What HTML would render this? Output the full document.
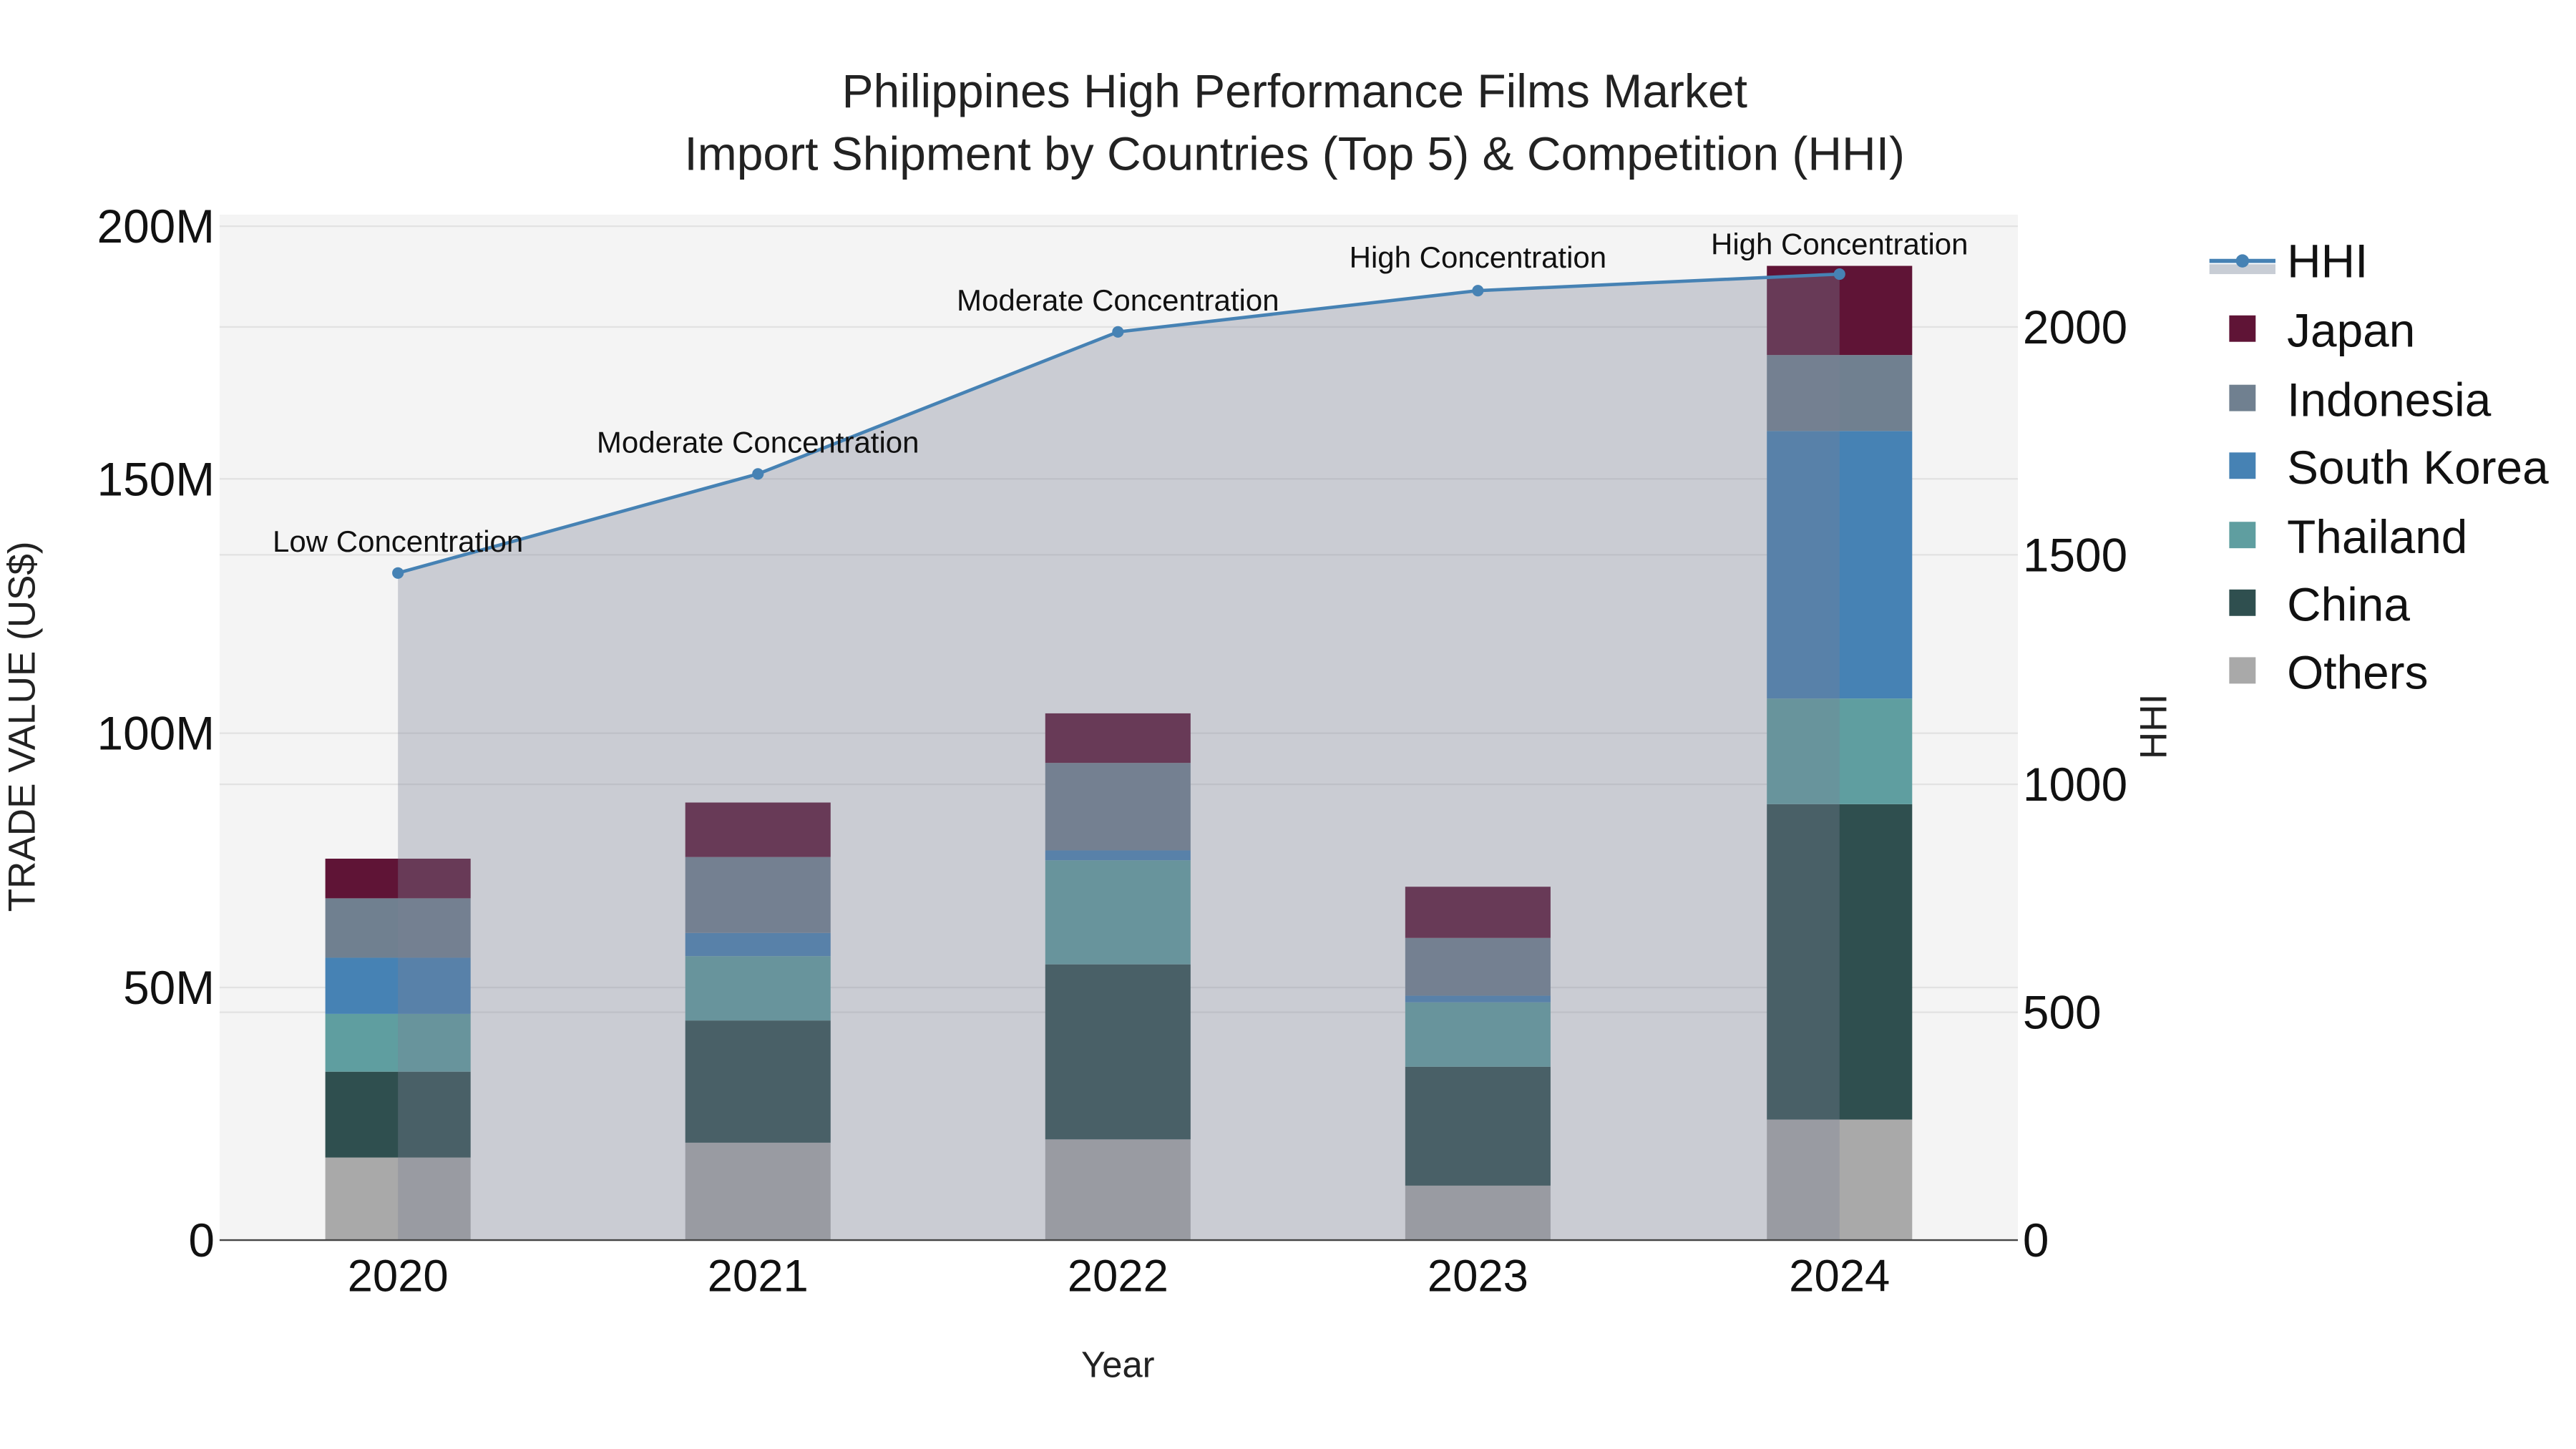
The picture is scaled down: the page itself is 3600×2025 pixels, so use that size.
<!DOCTYPE html>
<html><head><meta charset="utf-8"><style>html,body{margin:0;padding:0;background:#fff}svg{display:block}</style></head>
<body>
<svg width="3600" height="2025" viewBox="0 0 1560 877.5" xmlns="http://www.w3.org/2000/svg" font-family="Liberation Sans, sans-serif">
<rect x="0" y="0" width="1560" height="877.5" fill="#fff"/>
<rect x="133" y="130" width="1089" height="621" fill="#f4f4f4"/>
<g stroke="#e2e2e2" stroke-width="1">
<line x1="133" x2="1222" y1="137" y2="137"/><line x1="133" x2="1222" y1="290" y2="290"/><line x1="133" x2="1222" y1="444" y2="444"/><line x1="133" x2="1222" y1="598" y2="598"/>
<line x1="133" x2="1222" y1="198" y2="198"/><line x1="133" x2="1222" y1="336" y2="336"/><line x1="133" x2="1222" y1="475" y2="475"/><line x1="133" x2="1222" y1="613" y2="613"/>
</g>
<g>
<rect x="197" y="701" width="88" height="50" fill="#a9a9a9"/><rect x="197" y="649" width="88" height="52" fill="#2f4f4f"/><rect x="197" y="614" width="88" height="35" fill="#5f9ea0"/><rect x="197" y="580" width="88" height="34" fill="#4682b4"/><rect x="197" y="544" width="88" height="36" fill="#708090"/><rect x="197" y="520" width="88" height="24" fill="#5f1436"/>
<rect x="415" y="692" width="88" height="59" fill="#a9a9a9"/><rect x="415" y="618" width="88" height="74" fill="#2f4f4f"/><rect x="415" y="579" width="88" height="39" fill="#5f9ea0"/><rect x="415" y="565" width="88" height="14" fill="#4682b4"/><rect x="415" y="519" width="88" height="46" fill="#708090"/><rect x="415" y="486" width="88" height="33" fill="#5f1436"/>
<rect x="633" y="690" width="88" height="61" fill="#a9a9a9"/><rect x="633" y="584" width="88" height="106" fill="#2f4f4f"/><rect x="633" y="521" width="88" height="63" fill="#5f9ea0"/><rect x="633" y="515" width="88" height="6" fill="#4682b4"/><rect x="633" y="462" width="88" height="53" fill="#708090"/><rect x="633" y="432" width="88" height="30" fill="#5f1436"/>
<rect x="851" y="718" width="88" height="33" fill="#a9a9a9"/><rect x="851" y="646" width="88" height="72" fill="#2f4f4f"/><rect x="851" y="607" width="88" height="39" fill="#5f9ea0"/><rect x="851" y="603" width="88" height="4" fill="#4682b4"/><rect x="851" y="568" width="88" height="35" fill="#708090"/><rect x="851" y="537" width="88" height="31" fill="#5f1436"/>
<rect x="1070" y="678" width="88" height="73" fill="#a9a9a9"/><rect x="1070" y="487" width="88" height="191" fill="#2f4f4f"/><rect x="1070" y="423" width="88" height="64" fill="#5f9ea0"/><rect x="1070" y="261" width="88" height="162" fill="#4682b4"/><rect x="1070" y="215" width="88" height="46" fill="#708090"/><rect x="1070" y="161" width="88" height="54" fill="#5f1436"/>
</g>
<polygon points="241,751 241,347 459,287 677,201 895,176 1114,166 1114,751" fill="rgb(122,130,150)" fill-opacity="0.35"/>
<polyline points="241,347 459,287 677,201 895,176 1114,166" fill="none" stroke="#4682b4" stroke-width="2"/>
<g fill="#4682b4"><circle cx="241" cy="347" r="3.5"/><circle cx="459" cy="287" r="3.5"/><circle cx="677" cy="201" r="3.5"/><circle cx="895" cy="176" r="3.5"/><circle cx="1114" cy="166" r="3.5"/></g>
<line x1="133" x2="1222" y1="751" y2="751" stroke="#444" stroke-width="1"/>
<g font-size="18.2" text-anchor="middle" fill="#111">
<text x="241" y="334">Low Concentration</text><text x="459" y="274">Moderate Concentration</text><text x="677" y="188">Moderate Concentration</text><text x="895" y="162">High Concentration</text><text x="1114" y="154">High Concentration</text>
</g>
<g font-size="28.5" text-anchor="end" fill="#111">
<text x="130" y="147">200M</text><text x="130" y="300">150M</text><text x="130" y="454">100M</text><text x="130" y="608">50M</text><text x="130" y="761">0</text>
</g>
<g font-size="28.5" fill="#111">
<text x="1225" y="208">2000</text><text x="1225" y="346">1500</text><text x="1225" y="485">1000</text><text x="1225" y="623">500</text><text x="1225" y="761">0</text>
</g>
<g font-size="27.5" text-anchor="middle" fill="#111">
<text x="241" y="782">2020</text><text x="459" y="782">2021</text><text x="677" y="782">2022</text><text x="895" y="782">2023</text><text x="1114" y="782">2024</text>
</g>
<text x="677" y="834" font-size="22" text-anchor="middle" fill="#222">Year</text>
<text transform="translate(21,440) rotate(-90)" font-size="23" text-anchor="middle" fill="#222">TRADE VALUE (US$)</text>
<text transform="translate(1312,440) rotate(-90)" font-size="23" text-anchor="middle" fill="#222">HHI</text>
<g font-size="28.6" text-anchor="middle" fill="#222">
<text x="784" y="65">Philippines High Performance Films Market</text>
<text x="784" y="103">Import Shipment by Countries (Top 5) &amp; Competition (HHI)</text>
</g>
<rect x="1338" y="160" width="40" height="6" fill="#c8cdd5"/>
<line x1="1338" x2="1378" y1="158" y2="158" stroke="#4682b4" stroke-width="2.5"/>
<circle cx="1358" cy="158" r="4" fill="#4682b4"/>
<rect x="1350" y="191" width="16" height="16" fill="#5f1436"/>
<rect x="1350" y="233" width="16" height="16" fill="#708090"/>
<rect x="1350" y="274" width="16" height="16" fill="#4682b4"/>
<rect x="1350" y="316" width="16" height="16" fill="#5f9ea0"/>
<rect x="1350" y="357" width="16" height="16" fill="#2f4f4f"/>
<rect x="1350" y="398" width="16" height="16" fill="#a9a9a9"/>
<g font-size="28.5" fill="#111">
<text x="1385" y="168">HHI</text><text x="1385" y="210">Japan</text><text x="1385" y="252">Indonesia</text><text x="1385" y="293">South Korea</text><text x="1385" y="335">Thailand</text><text x="1385" y="376">China</text><text x="1385" y="417">Others</text>
</g>
</svg>
</body></html>
